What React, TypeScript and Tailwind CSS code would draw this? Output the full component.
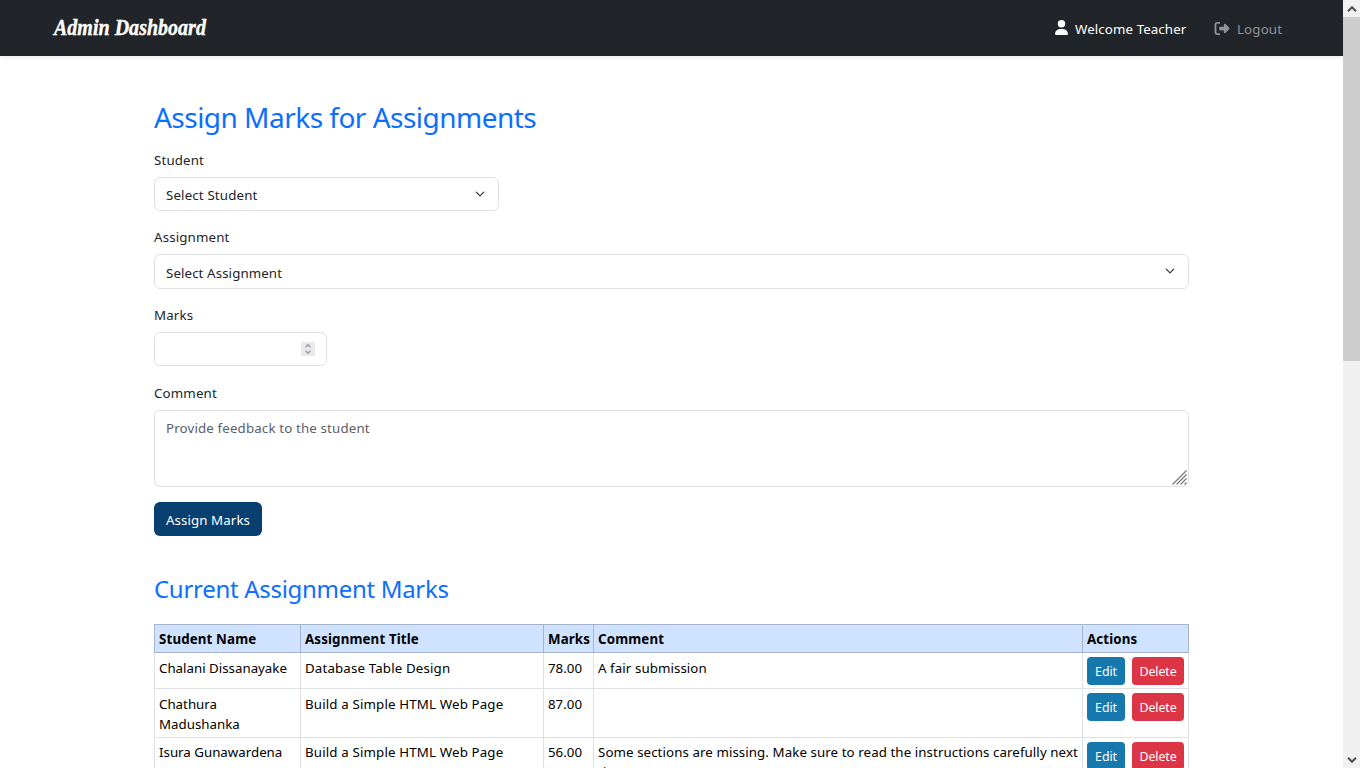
import type { ReactNode } from "react";
import { FaUser, FaRightFromBracket } from "react-icons/fa6";

type Mark = { student: string; title: string; marks: string; comment: string; height: string; pad: string };

const rows: Mark[] = [
  { student: "Chalani Dissanayake", title: "Database Table Design", marks: "78.00", comment: "A fair submission", height: "h-[36px]", pad: "pt-[5px]" },
  { student: "Chathura Madushanka", title: "Build a Simple HTML Web Page", marks: "87.00", comment: "", height: "h-[49px]", pad: "pt-[5px]" },
  {
    student: "Isura Gunawardena",
    title: "Build a Simple HTML Web Page",
    marks: "56.00",
    comment: "Some sections are missing. Make sure to read the instructions carefully next time.",
    height: "h-[49px]",
    pad: "pt-[4px]",
  },
];

function Chevron() {
  return (
    <svg viewBox="0 0 16 16" className="mt-[-1px] mr-px h-[10px] w-[10px]" fill="none" stroke="#343a40" strokeWidth="2" strokeLinecap="round" strokeLinejoin="round">
      <path d="m2 5 6 6 6-6" />
    </svg>
  );
}

function Label({ children }: { children: ReactNode }) {
  return <div className="h-5 text-[13.3px] leading-5 tracking-[0.15px]">{children}</div>;
}

function Navbar() {
  return (
    <header className="flex h-14 shrink-0 items-center justify-between bg-[#212529] pr-[61px] pl-[54px] shadow-[0_2px_4px_rgba(0,0,0,0.075)]">
      <div className="origin-left scale-x-[0.89] font-['Liberation_Serif',serif] text-[22.5px] leading-7 font-bold whitespace-nowrap text-white italic [-webkit-text-stroke:0.4px_white]">
        Admin Dashboard
      </div>
      <nav className="flex items-center text-[13.3px] leading-5 whitespace-nowrap">
        <FaUser className="mb-px h-[15px] w-[13px] text-white" />
        <span className="mt-0.5 ml-[7px] w-[112px] tracking-[0.1px] text-white">Welcome Teacher</span>
        <FaRightFromBracket className="ml-[27px] h-[15px] w-[16px] text-[#919395]" />
        <span className="mt-0.5 ml-[7px] w-[45px] tracking-[0.15px] text-[#919395]">Logout</span>
      </nav>
    </header>
  );
}

function MarksTable() {
  return (
    <table className="mt-[19px] w-[1035px] table-fixed border-collapse text-[13.3px] leading-5 text-black">
      <colgroup>
        <col className="w-[146px]" />
        <col className="w-[243px]" />
        <col className="w-[50px]" />
        <col className="w-[489px]" />
        <col className="w-[106px]" />
      </colgroup>
      <thead>
        <tr className="h-[28px] bg-[#cfe2ff] text-left tracking-[0.14px] whitespace-nowrap">
          {["Student Name", "Assignment Title", "Marks", "Comment", "Actions"].map((h) => (
            <th key={h} className="border border-[#a6b5cc] py-0 pt-px pl-1 font-bold">
              {h}
            </th>
          ))}
        </tr>
      </thead>
      <tbody>
        {rows.map((r) => (
          <tr key={r.student} className={`${r.height} align-top`}>
            <td className={`border border-[#dee2e6] px-1 pb-0 ${r.pad}`}>{r.student}</td>
            <td className={`border border-[#dee2e6] px-1 pb-0 tracking-[0.15px] ${r.pad}`}>{r.title}</td>
            <td className={`border border-[#dee2e6] px-1 pb-0 ${r.pad}`}>{r.marks}</td>
            <td className={`border border-[#dee2e6] pr-0 pb-0 pl-1 tracking-[0.08px] ${r.pad}`}>{r.comment}</td>
            <td className="border border-[#dee2e6] px-1 pt-1 pb-0">
              <div className="flex gap-[7px] text-[12.4px] tracking-[-0.1px] text-white">
                <button className="h-7 w-[38px] rounded-[4px] bg-[#1678ad] pt-px">Edit</button>
                <button className="h-7 w-[52px] rounded-[4px] bg-[#dc3545] pt-px">Delete</button>
              </div>
            </td>
          </tr>
        ))}
      </tbody>
    </table>
  );
}

function Scrollbar() {
  return (
    <div className="flex h-full w-[17px] shrink-0 flex-col bg-[#f0f0f0]">
      <div className="flex h-[17px] items-center justify-center">
        <svg viewBox="0 0 10 6" className="h-[6px] w-[10px]" fill="none" stroke="#505050" strokeWidth="2">
          <path d="m1 5.2 4-4 4 4" />
        </svg>
      </div>
      <div className="h-[344px] bg-[#cdcdcd]" />
      <div className="mt-auto flex h-[17px] items-center justify-center">
        <svg viewBox="0 0 10 6" className="h-[6px] w-[10px]" fill="none" stroke="#505050" strokeWidth="2">
          <path d="m1 .8 4 4 4-4" />
        </svg>
      </div>
    </div>
  );
}

export default function App() {
  return (
    <div className="flex h-screen w-full overflow-hidden bg-white font-['Noto_Sans',sans-serif] text-[#212529]">
      <div className="flex min-w-0 flex-1 flex-col overflow-hidden">
        <Navbar />
        <main className="w-[1189px] pt-[42px] pl-[154px] text-[13.3px] leading-5">
          <h2 className="h-[39px] text-[28px] leading-[38px] tracking-[-0.52px] whitespace-nowrap text-[#0d6efd]">Assign Marks for Assignments</h2>
          <div className="pt-[13px]">
            <Label>Student</Label>
            <div className="mt-[7px] flex h-[34px] w-[345px] items-center justify-between rounded-md border border-[#dee2e6] pr-3 pl-[11px]">
              <span className="mt-0.5 tracking-[0.15px]">Select Student</span>
              <Chevron />
            </div>
          </div>
          <div className="pt-4">
            <Label>Assignment</Label>
            <div className="mt-[7px] flex h-[35px] items-center justify-between rounded-md border border-[#dee2e6] pr-3 pl-[11px]">
              <span className="mt-0.5 tracking-[0.1px]">Select Assignment</span>
              <Chevron />
            </div>
          </div>
          <div className="pt-4">
            <Label>Marks</Label>
            <div className="mt-[7px] flex h-[34px] w-[173px] items-center justify-end rounded-md border border-[#dee2e6] pr-[11px]">
              <svg viewBox="0 0 14 14" className="h-[14px] w-[14px] bg-[#e9e9ed]" fill="none" stroke="#9a9aa2" strokeWidth="1.4">
                <path d="m4.5 5.2 2.5-2.4 2.5 2.4M4.5 8.8 7 11.2l2.5-2.4" />
              </svg>
            </div>
          </div>
          <div className="pt-[17px]">
            <Label>Comment</Label>
            <div className="mt-[7px] flex h-[77px] justify-between rounded-md border border-[#dee2e6] pt-[7px] pr-px pl-[11px] text-[#5a6067]">
              <span className="tracking-[0.15px]">Provide feedback to the student</span>
              <svg viewBox="0 0 15 15" className="mb-px h-[15px] w-[15px] self-end" fill="none" stroke="#777" strokeWidth="1.2">
                <path d="M.5 14.5l14-14M4.5 14.5l10-10M8.5 14.5l6-6M12.5 14.5l2-2" />
              </svg>
            </div>
          </div>
          <button className="mt-[15px] block h-[34px] w-[108px] rounded-md bg-[#073f70] pt-0.5 tracking-[0.1px] whitespace-nowrap text-white">
            Assign Marks
          </button>
          <h3 className="mt-[37px] h-8 text-[24px] leading-8 tracking-[-0.3px] whitespace-nowrap text-[#0d6efd]">Current Assignment Marks</h3>
          <MarksTable />
        </main>
      </div>
      <Scrollbar />
    </div>
  );
}
